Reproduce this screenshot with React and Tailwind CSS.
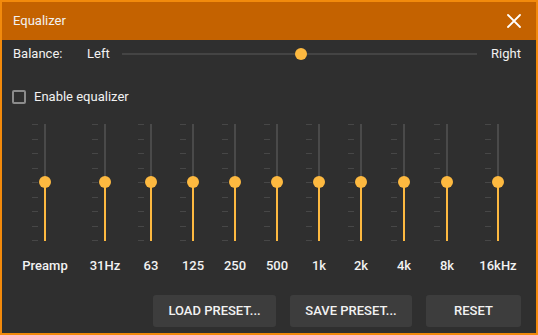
import React from "react";

const bands = [
  { label: "Preamp", ml: "ml-[22px]" },
  { label: "31Hz", ml: "ml-[18px]" },
  { label: "63", ml: "ml-[4px]" },
  { label: "125", ml: "ml-0" },
  { label: "250", ml: "ml-0" },
  { label: "500", ml: "ml-0" },
  { label: "1k", ml: "ml-0" },
  { label: "2k", ml: "ml-0" },
  { label: "4k", ml: "ml-[1px]" },
  { label: "8k", ml: "ml-[1px]" },
  { label: "16kHz", ml: "ml-[9px]" },
];

function VSlider() {
  const ticks = Array.from({ length: 9 });
  return (
    <div className="relative h-[119px] w-[42px] flex justify-center">
      <div className="absolute left-[8px] top-[1px] bottom-[1px] flex flex-col justify-between">
        {ticks.map((_, i) => (
          <div key={i} className="h-px w-[6px] bg-[#474747]" />
        ))}
      </div>
      <div className="flex flex-col w-[2px] h-full pt-px pb-px">
        <div className="h-[58px] bg-[#4a4a4a]" />
        <div className="flex-1 bg-[#fdb940]" />
      </div>
      <div className="absolute top-[53px] left-[15px] w-[12px] h-[12px] rounded-full bg-[#fdb940]" />
    </div>
  );
}

export default function App() {
  return (
    <div
      className="w-[538px] h-[335px] border-2 border-[#f28a0c] bg-[#2f2f2f] flex flex-col text-[#f2f2f2] overflow-hidden"
      style={{ fontFamily: "Roboto, 'Liberation Sans', sans-serif" }}
    >
      <div className="h-[38px] bg-[#c46200] flex items-center justify-between pl-[11px] pr-[14px] shrink-0">
        <span className="text-[13px]">Equalizer</span>
        <svg width="16" height="16" viewBox="0 0 16 16">
          <path d="M2 2 L14 14 M14 2 L2 14" stroke="#ffffff" strokeWidth="1.8" strokeLinecap="round" />
        </svg>
      </div>

      <div className="h-[28px] flex items-center pl-[11px] pr-[15px] text-[13px]">
        <span className="w-[74px]">Balance:</span>
        <span className="w-[35px]">Left</span>
        <div className="relative flex-1 h-[2px] bg-[#444444] mr-[14px]">
          <div className="absolute left-[173px] top-[-5px] w-[12px] h-[12px] rounded-full bg-[#fdb940]" />
        </div>
        <span>Right</span>
      </div>

      <div className="mt-[19px] h-[20px] flex items-center pl-[10px] text-[13px]">
        <div className="w-[14px] h-[14px] border-2 border-[#8c8c8c] rounded-[2px]" />
        <span className="ml-[8px]">Enable equalizer</span>
      </div>

      <div className="mt-[16px] flex">
        {bands.map((b) => (
          <div key={b.label} className={`flex flex-col items-center w-[42px] ${b.ml}`}>
            <VSlider />
            <span className="mt-[16px] text-[13px] leading-[16px] font-medium whitespace-nowrap">{b.label}</span>
          </div>
        ))}
      </div>

      <div className="mt-[21px] flex justify-end gap-[14px] pr-[15px]">
        <button className="w-[123px] h-[32px] bg-[#3d3d3d] rounded-[3px] text-[13px] font-medium">LOAD PRESET...</button>
        <button className="w-[122px] h-[32px] bg-[#3d3d3d] rounded-[3px] text-[13px] font-medium">SAVE PRESET...</button>
        <button className="w-[95px] h-[32px] bg-[#3d3d3d] rounded-[3px] text-[13px] font-medium">RESET</button>
      </div>
    </div>
  );
}
